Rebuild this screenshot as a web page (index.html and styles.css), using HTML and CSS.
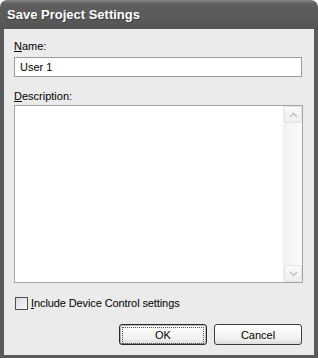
FILE: index.html
```html
<!DOCTYPE html>
<html lang="en">
<head>
    <meta charset="UTF-8">
    <title>Save Project Settings</title>
    <link rel="stylesheet" href="styles.css">
</head>
<body>
    <div class="window">
        <div class="titlebar">Save Project Settings</div>
        <div class="content">
            <label class="label" for="name"><u>N</u>ame:</label>
            <input class="field" type="text" id="name" value="User 1">

            <label class="label desc-label"><u>D</u>escription:</label>
            <div class="memo">
                <div class="memo-text"></div>
                <div class="scrollbar">
                    <div class="sb-btn">
                        <svg width="9" height="6" viewBox="0 0 9 6"><path d="M1 5 L4.5 1.5 L8 5" fill="none" stroke="#c4c4c4" stroke-width="1.6"/></svg>
                    </div>
                    <div class="sb-track"></div>
                    <div class="sb-btn">
                        <svg width="9" height="6" viewBox="0 0 9 6"><path d="M1 1 L4.5 4.5 L8 1" fill="none" stroke="#c4c4c4" stroke-width="1.6"/></svg>
                    </div>
                </div>
            </div>

            <div class="check-row">
                <span class="checkbox"></span>
                <span class="check-text"><u>I</u>nclude Device Control settings</span>
            </div>

            <div class="buttons">
                <button class="btn btn-default"><span class="focus">OK</span></button>
                <button class="btn">Cancel</button>
            </div>
        </div>
    </div>
</body>
</html>
```

FILE: styles.css
```css
body {
    margin: 0;
    background: #ffffff;
    font-family: "Liberation Sans", Arial, sans-serif;
    font-size: 11px;
    color: #000;
}
.window {
    width: 318px;
    height: 358px;
    display: flex;
    flex-direction: column;
}
.titlebar {
    height: 29px;
    box-sizing: border-box;
    padding: 7px 0 0 7px;
    border-radius: 7px 7px 0 0;
    background: linear-gradient(to bottom, #8a8a8a 0px, #6e6e6e 2px, #5e5e5e 5px, #595959 20px, #545454 29px);
    color: #fff;
    font-weight: bold;
    font-size: 13px;
    line-height: 16px;
    text-shadow: 1px 1px 0 #3c3c3c;
}
.content {
    flex: 1;
    background: #ebebeb;
    border: 4px solid #5a5a5a;
    border-top: none;
    border-bottom-width: 3px;
    padding: 11px 12px 0 10px;
    display: flex;
    flex-direction: column;
}
.label {
    display: block;
    line-height: 13px;
    height: 13px;
}
.field {
    margin-top: 4px;
    height: 20px;
    box-sizing: border-box;
    border: 1px solid #9c9c9c;
    padding: 0 5px;
    font: inherit;
    background: #fff;
    outline: none;
}
.desc-label {
    margin-top: 13px;
}
.memo {
    margin-top: 2px;
    height: 178px;
    box-sizing: border-box;
    margin-right: -1px;
    border: 1px solid #a4a4a4;
    background: #fff;
    display: flex;
}
.memo-text {
    flex: 1;
}
.scrollbar {
    width: 18px;
    display: flex;
    flex-direction: column;
    background: #f7f7f7;
    border-left: 1px solid #f0f0f0;
}
.sb-btn {
    height: 17px;
    box-sizing: border-box;
    border: 1px solid #e4e4e4;
    border-radius: 2px;
    background: linear-gradient(to bottom, #fafafa, #eeeeee);
    display: flex;
    align-items: center;
    justify-content: center;
}
.sb-track {
    flex: 1;
    background: linear-gradient(to right, #f2f2f2, #fbfbfb);
}
.check-row {
    margin-top: 14px;
    display: flex;
    align-items: center;
    gap: 3px;
    margin-left: 1px;
    line-height: 13px;
}
.check-text {
    letter-spacing: -0.1px;
}
.checkbox {
    width: 13px;
    height: 13px;
    box-sizing: border-box;
    border: 1px solid #505050;
    background: linear-gradient(135deg, #dcdcdc, #f8f8f8);
}
.buttons {
    margin-top: 14px;
    display: flex;
    justify-content: flex-end;
    gap: 7px;
}
.btn {
    width: 88px;
    height: 21px;
    box-sizing: border-box;
    border: 1px solid #3c3c3c;
    border-radius: 3px;
    background: linear-gradient(to bottom, #ffffff, #f2f2f2 70%, #dcdcdc);
    font: inherit;
    color: #000;
    padding: 0;
}
.btn-default {
    border-color: #2a2a2a;
    box-shadow: inset 0 0 0 1px #b8b8b8;
}
.focus {
    display: block;
    margin: 2px;
    height: 15px;
    line-height: 15px;
    border: 1px dotted #505050;
}
```
